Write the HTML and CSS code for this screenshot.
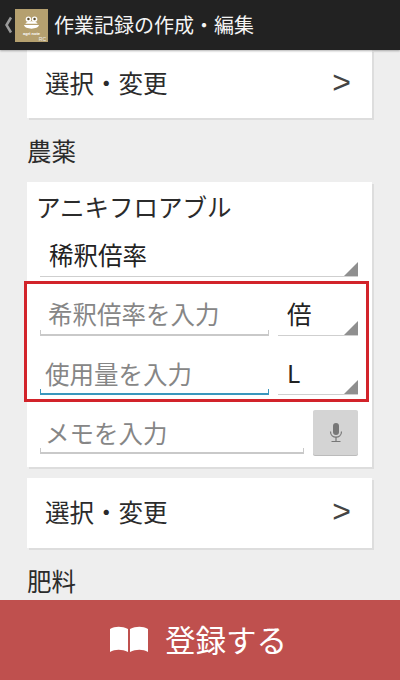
FILE: index.html
```html
<!DOCTYPE html>
<html lang="ja">
<head>
  <meta charset="UTF-8">
  <title>作業記録の作成・編集</title>
  <link rel="stylesheet" href="styles.css">
</head>
<body>
  <header class="topbar">
    <span class="back">
      <svg width="9" height="18" viewBox="0 0 9 18"><path d="M7 1.500 2.500 9 7 16.500" fill="none" stroke="#9a9a9a" stroke-width="2.500"/></svg>
    </span>
    <div class="logo">
      <svg width="15" height="14" viewBox="0 0 22 20">
        <circle cx="6.500" cy="4.500" r="4" fill="#fff"/>
        <circle cx="15.500" cy="4.500" r="4" fill="#fff"/>
        <circle cx="6.500" cy="4" r="1.800" fill="#5a4c2c"/>
        <circle cx="15.500" cy="4" r="1.800" fill="#5a4c2c"/>
        <path d="M2 11C3 6 19 6 20 11Z" fill="#fff"/>
        <path d="M0 13H22C21 20 1 20 0 13Z" fill="#fff"/>
      </svg>
      <span class="logo-name">agri note</span>
      <span class="logo-sub">RC</span>
    </div>
    <h1 class="title">作業記録の作成・編集</h1>
  </header>

  <main class="content">
    <div class="card link-card first">
      <span>選択・変更</span><span class="arrow">&gt;</span>
    </div>

    <h2 class="section">農薬</h2>

    <div class="card form-card">
      <div class="name">アニキフロアブル</div>
      <div class="spinner wide">稀釈倍率</div>

      <div class="highlight">
        <div class="row">
          <div class="field grow"><span class="hint indent">希釈倍率を入力</span></div>
          <div class="spinner unit">倍</div>
        </div>
        <div class="row second">
          <div class="field grow active"><span class="hint">使用量を入力</span></div>
          <div class="spinner unit">L</div>
        </div>
      </div>

      <div class="row memo">
        <div class="field grow"><span class="hint">メモを入力</span></div>
        <button class="mic">
          <svg width="14" height="20" viewBox="0 0 14 20">
            <rect x="4" y="0" width="6" height="12" rx="3" fill="#777"/>
            <path d="M1.500 8.500C1.500 16 12.500 16 12.500 8.500" fill="none" stroke="#777" stroke-width="1.200"/>
            <path d="M7 14V18M2.500 18.500H11.500" fill="none" stroke="#777" stroke-width="1.200"/>
          </svg>
        </button>
      </div>
    </div>

    <div class="card link-card">
      <span>選択・変更</span><span class="arrow">&gt;</span>
    </div>

    <h2 class="section">肥料</h2>
  </main>

  <button class="submit">
    <svg width="40" height="27" viewBox="0 0 40 27">
      <path d="M1 3C6 0 13 0 19 3V26C13 23 6 23 1 26Z" fill="#fff"/>
      <path d="M21 3C27 0 34 0 39 3V26C34 23 27 23 21 26Z" fill="#fff"/>
    </svg>
    <span>登録する</span>
  </button>
</body>
</html>
```

FILE: styles.css
```css
* {
  box-sizing: border-box;
}
html, body {
  height: 100%;
}
body {
  margin: 0;
  display: flex;
  flex-direction: column;
  overflow: hidden;
  background: #eeeeee;
  font-family: "Noto Sans CJK JP", "Noto Sans", sans-serif;
  color: #2b2b2b;
}
.topbar {
  height: 50px;
  flex: none;
  display: flex;
  align-items: center;
  background: #222222;
  padding-left: 4px;
  box-shadow: 0 1px 2px rgba(0,0,0,0.3);
  position: relative;
}
.back {
  display: flex;
  width: 11px;
}
.logo {
  width: 33px;
  height: 33px;
  margin-top: 1px;
  background: #b5a06f;
  display: flex;
  flex-direction: column;
  align-items: center;
  padding-top: 7px;
  position: relative;
}
.logo-name {
  font-family: "Liberation Sans", sans-serif;
  font-size: 4px;
  line-height: 5px;
  font-weight: bold;
  color: #fff;
  margin-top: 1px;
}
.logo-sub {
  position: absolute;
  right: 2px;
  bottom: 0;
  font-family: "Liberation Sans", sans-serif;
  font-size: 5px;
  line-height: 6px;
  color: #eee;
}
.title {
  margin: 0 0 0 6px;
  font-size: 20px;
  font-weight: normal;
  line-height: 28px;
  color: #f4f4f4;
}
.content {
  flex: 1;
  min-height: 0;
  overflow: hidden;
  padding: 0 28px 0 27px;
}
.card {
  background: #fff;
  box-shadow: 2px 2px 0 #dddddd;
}
.link-card {
  height: 70px;
  display: flex;
  align-items: center;
  justify-content: space-between;
  padding: 0 21px 4px 18px;
  font-size: 24.500px;
}
.link-card.first {
  height: 68px;
}
.arrow {
  font-family: "Liberation Sans", sans-serif;
  font-size: 32px;
  font-weight: 300;
  color: #444444;
}
.section {
  margin: 0;
  height: 64px;
  padding-top: 15px;
  font-size: 24.500px;
  font-weight: normal;
  line-height: 36px;
}
.form-card {
  height: 285px;
  margin-bottom: 11px;
  padding: 7px 14px 0 13px;
  position: relative;
}
.name {
  font-size: 24.500px;
  line-height: 36px;
  margin-left: -4px;
}
.spinner {
  position: relative;
  border-bottom: 1px solid #cfcfcf;
  font-size: 24.500px;
  color: #222222;
}
.spinner::after {
  content: "";
  position: absolute;
  right: 0;
  bottom: 0;
  border-style: solid;
  border-width: 0 0 14px 14px;
  border-color: transparent transparent #8f8f8f transparent;
}
.wide {
  height: 52px;
  padding: 12px 0 0 9px;
  line-height: 36px;
}
.highlight {
  border: 3px solid #d2232a;
  margin: 4px -11px 0 -16px;
  height: 121px;
  padding: 3px 8px 0 13px;
}
.row {
  display: flex;
  align-items: flex-end;
  gap: 9px;
}
.second {
  margin-top: 10px;
}
.field {
  position: relative;
  height: 49px;
  border-bottom: 2px solid #c9c9c9;
  padding: 9px 0 0 5px;
}
.field::before, .field::after {
  content: "";
  position: absolute;
  bottom: 0;
  width: 1px;
  height: 4px;
  background: #c9c9c9;
}
.field::before {
  left: 0;
}
.field::after {
  right: 0;
}
.active {
  border-bottom-color: #3a97bd;
}
.active::before, .active::after {
  background: #3a97bd;
}
.grow {
  flex: 1;
}
.hint {
  font-size: 24.500px;
  line-height: 36px;
  color: #868686;
}
.second .hint {
  position: relative;
  top: 1px;
}
.indent {
  margin-left: 3px;
}
.unit {
  width: 80px;
  height: 49px;
  padding: 9px 0 0 9px;
  line-height: 36px;
}
.memo {
  margin-top: 3px;
  gap: 9px;
}
.memo .hint {
  position: relative;
  top: 1px;
}
.mic {
  width: 45px;
  height: 45px;
  margin-bottom: -1px;
  border: none;
  border-radius: 2px;
  background: #d4d4d4;
  box-shadow: 0 1px 0 #bbbbbb;
  display: flex;
  align-items: center;
  justify-content: center;
  padding: 0;
}
.submit {
  flex: none;
  height: 80px;
  width: 100%;
  border: none;
  background: #bf504e;
  color: #fff;
  display: flex;
  align-items: center;
  justify-content: center;
  gap: 16px;
  font-family: inherit;
  font-size: 30.500px;
  padding: 0 4px 2px 0;
}
```
